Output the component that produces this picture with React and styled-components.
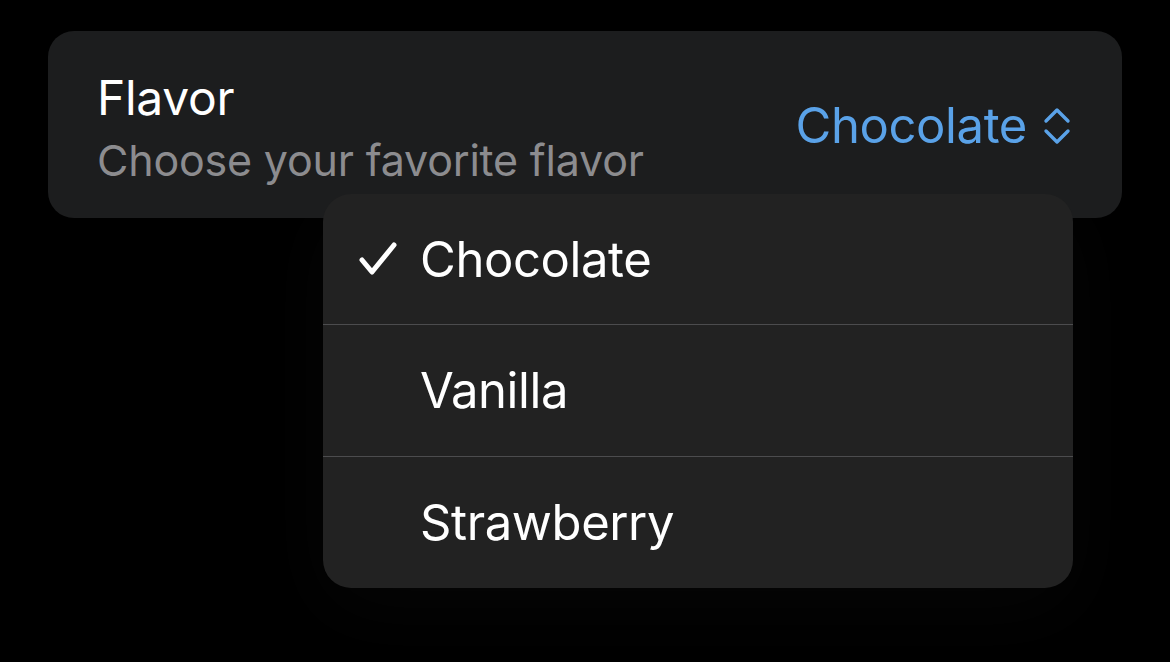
import React, { useState } from 'react';
import styled, { createGlobalStyle } from 'styled-components';

const GlobalStyle = createGlobalStyle`
  html, body {
    margin: 0;
    padding: 0;
    background: #000;
  }
  body {
    font-family: Inter, 'Noto Sans', sans-serif;
    -webkit-font-smoothing: antialiased;
  }
`;

const Screen = styled.div`
  width: 1170px;
  height: 662px;
  background: #000;
  padding: 31px 48px 0;
  box-sizing: border-box;
  overflow: hidden;
`;

const Field = styled.div`
  position: relative;
  height: 187px;
  border-radius: 26px;
  background: #1c1d1e;
  display: flex;
  align-items: flex-start;
  justify-content: space-between;
  padding: 40px 51px 0 49px;
  box-sizing: border-box;
`;

const Labels = styled.div`
  display: flex;
  flex-direction: column;
  gap: 10px;
`;

const Title = styled.div`
  color: #ffffff;
  font-size: 48px;
  line-height: 54px;
  letter-spacing: -0.3px;
`;

const Subtitle = styled.div`
  color: #8c8c8f;
  font-size: 43px;
  line-height: 50px;
  letter-spacing: -0.2px;
`;

const Value = styled.button`
  all: unset;
  display: flex;
  align-items: center;
  gap: 16px;
  margin-top: 25px;
  color: #5aa2e8;
  font-size: 49px;
  line-height: 59px;
  letter-spacing: -0.4px;
  cursor: pointer;
`;

const Menu = styled.div`
  position: absolute;
  top: 163px;
  right: 49px;
  width: 750px;
  border-radius: 28px;
  background: #222222;
  overflow: hidden;
  box-shadow: 0 20px 80px rgba(255, 255, 255, 0.025);
`;

const Item = styled.div`
  display: flex;
  align-items: center;
  height: ${(p) => (p.$first ? '130px' : '131px')};
  padding-left: 36px;
  gap: 23px;
  color: #ffffff;
  font-size: 49px;
  letter-spacing: -0.4px;
  border-top: ${(p) => (p.$first ? 'none' : '1px solid #4c4c4e')};
  cursor: pointer;
`;

const CheckSlot = styled.div`
  width: 38px;
  display: flex;
  align-items: center;
  justify-content: center;
`;

function Chevrons() {
  return (
    <svg width="28" height="38" viewBox="0 0 28 38" fill="none">
      <path d="M3 14 L14 3 L25 14" stroke="#5aa2e8" strokeWidth="3.4" strokeLinecap="round" strokeLinejoin="round" />
      <path d="M3 24 L14 35 L25 24" stroke="#5aa2e8" strokeWidth="3.4" strokeLinecap="round" strokeLinejoin="round" />
    </svg>
  );
}

function Check() {
  return (
    <svg width="38" height="34" viewBox="0 0 38 34" fill="none">
      <path d="M3 18 L13 30 L35 3" stroke="#fff" strokeWidth="5" strokeLinecap="round" strokeLinejoin="round" />
    </svg>
  );
}

const flavors = ['Chocolate', 'Vanilla', 'Strawberry'];

export default function App() {
  const [selected, setSelected] = useState('Chocolate');

  return (
    <>
      <GlobalStyle />
      <Screen>
        <Field>
          <Labels>
            <Title>Flavor</Title>
            <Subtitle>Choose your favorite flavor</Subtitle>
          </Labels>
          <Value>
            {selected}
            <Chevrons />
          </Value>
          <Menu>
            {flavors.map((f, i) => (
              <Item key={f} $first={i === 0} onClick={() => setSelected(f)}>
                <CheckSlot>{f === selected && <Check />}</CheckSlot>
                {f}
              </Item>
            ))}
          </Menu>
        </Field>
      </Screen>
    </>
  );
}
